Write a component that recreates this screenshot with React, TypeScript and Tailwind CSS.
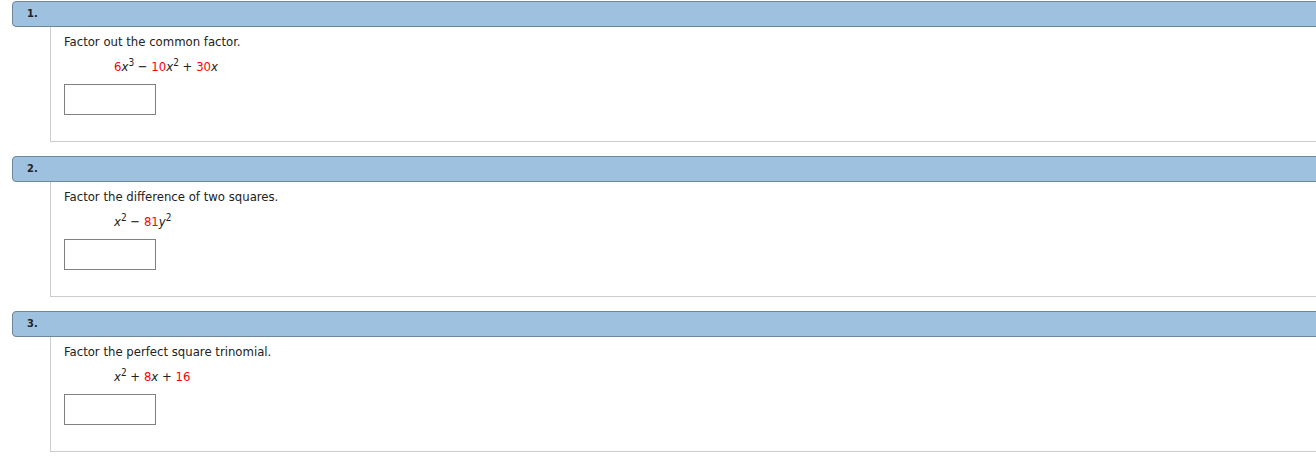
import React from "react";

const font = { fontFamily: '"DejaVu Sans Condensed", "DejaVu Sans", Verdana, sans-serif' };

function X({ v = "x" }: { v?: string }) {
  return <i className="text-[#222]">{v}</i>;
}
function Sup({ n }: { n: string }) {
  return <sup className="text-[10px] leading-none">{n}</sup>;
}
function R({ c }: { c: string }) {
  return <span className="text-[#ff0000]">{c}</span>;
}

function Question({ n, prompt, math }: { n: string; prompt: string; math: React.ReactNode }) {
  return (
    <div className="mb-[14px]">
      <div className="flex items-center h-[26px] w-[1400px] ml-[12px] bg-[#9dc1df] border border-[#6e8699] rounded-l-[4px]">
        <span className="ml-[14px] text-[11px] font-bold text-[#222]">{n}</span>
        <span className="ml-auto w-[92px] text-[12px] text-[#222] leading-none pt-[2px]">-/1 points</span>
      </div>
      <div className="ml-[50px] h-[115px] border-l border-b border-[#cccccc] pl-[13px] pt-[6px]">
        <div className="text-[13px] text-[#222] leading-[17px] h-[17px]">{prompt}</div>
        <div className="ml-[50px] mt-[8px] text-[13px] text-[#222] leading-[17px] h-[17px] whitespace-pre">{math}</div>
        <div className="mt-[9px] w-[92px] h-[31px] border border-[#808080] bg-white" />
      </div>
    </div>
  );
}

export default function App() {
  return (
    <div className="w-[1316px] h-[456px] overflow-hidden bg-white pt-[1px]" style={font}>
      <Question
        n="1."
        prompt="Factor out the common factor."
        math={
          <>
            <R c="6" />
            <X />
            <Sup n="3" />
            {" − "}
            <R c="10" />
            <X />
            <Sup n="2" />
            {" + "}
            <R c="30" />
            <X />
          </>
        }
      />
      <Question
        n="2."
        prompt="Factor the difference of two squares."
        math={
          <>
            <X />
            <Sup n="2" />
            {" − "}
            <R c="81" />
            <X v="y" />
            <Sup n="2" />
          </>
        }
      />
      <Question
        n="3."
        prompt="Factor the perfect square trinomial."
        math={
          <>
            <X />
            <Sup n="2" />
            {" + "}
            <R c="8" />
            <X />
            {" + "}
            <R c="16" />
          </>
        }
      />
    </div>
  );
}
